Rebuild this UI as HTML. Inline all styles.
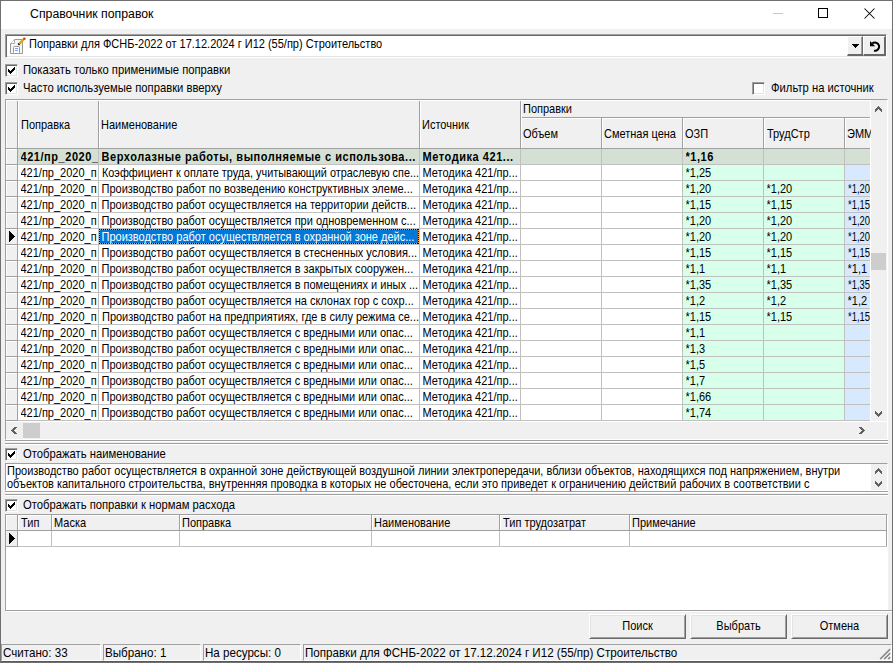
<!DOCTYPE html>
<html><head><meta charset="utf-8">
<style>
*{margin:0;padding:0;box-sizing:border-box}
html,body{width:893px;height:663px;overflow:hidden;background:#f0f0f0}
body{position:relative;font-family:"Liberation Sans",sans-serif;font-size:11px;color:#000}
.a{position:absolute}
.t{position:absolute;white-space:nowrap;line-height:15px;height:15px;transform:scaleY(1.125);transform-origin:0 0}
.c{position:absolute;white-space:nowrap;line-height:15px;height:15px;overflow:hidden;transform:scaleY(1.125);transform-origin:0 0}
.b{font-weight:bold;letter-spacing:0.55px}
.cb{position:absolute;width:13px;height:13px;background:#fff;border-top:1px solid #a0a0a0;border-left:1px solid #a0a0a0;border-right:1px solid #fff;border-bottom:1px solid #fff;box-shadow:inset 1px 1px 0 #696969, inset -1px -1px 0 #e3e3e3}
.btn{position:absolute;height:25px;background:#f0f0f0;border-top:1px solid #fff;border-left:1px solid #fff;border-right:1px solid #696969;border-bottom:1px solid #696969;box-shadow:inset 1px 1px 0 #e3e3e3, inset -1px -1px 0 #a0a0a0;text-align:center;line-height:22px}
</style></head><body>

<div class="a" style="left:0;top:0;width:893px;height:663px;border:1px solid #707070"></div>
<div class="a" style="left:1px;top:1px;width:891px;height:28px;background:#fff;"></div>
<div class="t" style="left:30px;top:6px;font-size:12.3px;line-height:17px;height:17px;transform:none">Справочник поправок</div>
<div class="a" style="left:773px;top:13px;width:10px;height:1px;background:#c8c8c8;"></div>
<div class="a" style="left:818px;top:8px;width:10px;height:10px;border:1px solid #000"></div>
<svg class="a" style="left:863px;top:7px" width="13" height="13"><path d="M1.5 1.5L11.5 11.5M11.5 1.5L1.5 11.5" stroke="#000" stroke-width="1.05"/></svg>
<div class="a" style="left:5px;top:34px;width:882px;height:24px;background:#fff;border-top:1px solid #a0a0a0;border-left:1px solid #a0a0a0;border-bottom:1px solid #fff;border-right:1px solid #fff;box-shadow:inset 1px 1px 0 #696969,inset -1px -1px 0 #e3e3e3"></div>
<svg class="a" style="left:9px;top:37px" width="18" height="18">
<path d="M1.5 6.5 L5.5 2.5 L13.5 2.5 L13.5 16.5 L1.5 16.5 Z" fill="#f6f6f6" stroke="#999"/>
<path d="M1.5 6.5 L5.5 6.5 L5.5 2.5" fill="#fff" stroke="#aaa"/>
<rect x="4.5" y="9.5" width="6" height="7" rx="1" fill="#fff" stroke="#999"/>
<path d="M6 11.5H9M6 13.5H9" stroke="#7c9cff"/>
<path d="M10.2 6.8 L14.6 2.4" stroke="#e6a800" stroke-width="2.4"/>
<path d="M9.3 7.7 L10.3 6.7" stroke="#111" stroke-width="2.2"/>
<circle cx="15.3" cy="1.8" r="1.3" fill="#e82a10"/>
</svg>
<div class="t" style="left:29px;top:36px;">Поправки для ФСНБ-2022 от 17.12.2024 г И12 (55/пр) Строительство</div>
<div class="a" style="left:847px;top:36px;width:16px;height:20px;background:#f0f0f0;border-top:1px solid #fff;border-left:1px solid #fff;border-right:1px solid #696969;border-bottom:2px solid #696969;box-shadow:inset -1px 0 0 #a0a0a0"></div>
<svg class="a" style="left:852px;top:44px" width="7" height="4" shape-rendering="crispEdges"><path d="M0 0h7v1h-7zM1 1h5v1h-5zM2 2h3v1h-3zM3 3h1v1h-1z" fill="#000"/></svg>
<div class="a" style="left:863px;top:36px;width:23px;height:20px;background:#f0f0f0;border-top:1px solid #fff;border-left:1px solid #fff;border-right:2px solid #696969;border-bottom:2px solid #696969"></div>
<svg class="a" style="left:869px;top:40px" width="12" height="12"><path d="M3.2 3.6 A4.1 4.1 0 1 1 5 10.6" stroke="#000" stroke-width="2" fill="none"/><path d="M1 1V6.2H6.2Z" fill="#000"/></svg>
<div class="cb" style="left:5px;top:64px"><svg width="11" height="11" style="position:absolute;left:0;top:0" shape-rendering="crispEdges"><path d="M8 2h1v1h-1zM7 3h2v1h-2zM2 4h1v1h-1zM6 4h3v1h-3zM2 5h2v1h-2zM5 5h3v1h-3zM2 6h5v1h-5zM3 7h3v1h-3zM4 8h1v1h-1z" fill="#000"/></svg></div>
<div class="t" style="left:23px;top:62px;font-size:11.25px">Показать только применимые поправки</div>
<div class="cb" style="left:5px;top:82px"><svg width="11" height="11" style="position:absolute;left:0;top:0" shape-rendering="crispEdges"><path d="M8 2h1v1h-1zM7 3h2v1h-2zM2 4h1v1h-1zM6 4h3v1h-3zM2 5h2v1h-2zM5 5h3v1h-3zM2 6h5v1h-5zM3 7h3v1h-3zM4 8h1v1h-1z" fill="#000"/></svg></div>
<div class="t" style="left:23px;top:80px;font-size:11.25px">Часто используемые поправки вверху</div>
<div class="cb" style="left:752px;top:82px"></div>
<div class="t" style="left:771px;top:80px;font-size:11.25px">Фильтр на источник</div>
<div class="a" style="left:5px;top:99px;width:883px;height:341px;background:#fff;border-top:1px solid #a0a0a0;border-left:1px solid #a0a0a0;border-right:1px solid #fff;border-bottom:1px solid #fff"></div>
<div class="a" style="left:6px;top:100px;width:864px;height:48px;background:#f0f0f0;"></div>
<div class="a" style="left:6px;top:148px;width:864px;height:1px;background:#a0a0a0;"></div>
<div class="a" style="left:17px;top:100px;width:1px;height:48px;background:#a0a0a0;"></div>
<div class="a" style="left:98px;top:100px;width:1px;height:48px;background:#a0a0a0;"></div>
<div class="a" style="left:419px;top:100px;width:1px;height:48px;background:#a0a0a0;"></div>
<div class="a" style="left:520px;top:100px;width:1px;height:48px;background:#a0a0a0;"></div>
<div class="a" style="left:521px;top:117px;width:349px;height:1px;background:#a0a0a0;"></div>
<div class="a" style="left:6px;top:100px;width:864px;height:1px;background:#fff;"></div>
<div class="a" style="left:6px;top:100px;width:1px;height:48px;background:#fff;"></div>
<div class="a" style="left:18px;top:100px;width:1px;height:48px;background:#fff;"></div>
<div class="a" style="left:99px;top:100px;width:1px;height:48px;background:#fff;"></div>
<div class="a" style="left:420px;top:100px;width:1px;height:48px;background:#fff;"></div>
<div class="a" style="left:521px;top:100px;width:1px;height:48px;background:#fff;"></div>
<div class="a" style="left:521px;top:118px;width:349px;height:1px;background:#fff;"></div>
<div class="a" style="left:602px;top:118px;width:1px;height:30px;background:#fff;"></div>
<div class="a" style="left:683px;top:118px;width:1px;height:30px;background:#fff;"></div>
<div class="a" style="left:764px;top:118px;width:1px;height:30px;background:#fff;"></div>
<div class="a" style="left:845px;top:118px;width:1px;height:30px;background:#fff;"></div>
<div class="a" style="left:601px;top:118px;width:1px;height:30px;background:#a0a0a0;"></div>
<div class="a" style="left:682px;top:118px;width:1px;height:30px;background:#a0a0a0;"></div>
<div class="a" style="left:763px;top:118px;width:1px;height:30px;background:#a0a0a0;"></div>
<div class="a" style="left:844px;top:118px;width:1px;height:30px;background:#a0a0a0;"></div>
<div class="t" style="left:21px;top:117px;">Поправка</div>
<div class="t" style="left:101px;top:117px;">Наименование</div>
<div class="t" style="left:422px;top:117px;">Источник</div>
<div class="t" style="left:523px;top:101px;">Поправки</div>
<div class="t" style="left:523px;top:126px;">Объем</div>
<div class="t" style="left:604px;top:126px;">Сметная цена</div>
<div class="t" style="left:685px;top:126px;">ОЗП</div>
<div class="t" style="left:767px;top:126px;">ТрудСтр</div>
<div class="t" style="left:847px;top:126px;">ЭММ</div>
<div class="a" style="left:6px;top:149px;width:11px;height:15px;background:#f0f0f0;border-top:1px solid #fff;border-left:1px solid #fff"></div>
<div class="a" style="left:6px;top:164px;width:12px;height:1px;background:#a0a0a0;"></div>
<div class="a" style="left:17px;top:149px;width:1px;height:15px;background:#a0a0a0;"></div>
<div class="a" style="left:18px;top:149px;width:852px;height:15px;background:#d4e0d4;"></div>
<div class="a" style="left:18px;top:164px;width:852px;height:1px;background:#c0c0c0;"></div>
<div class="a" style="left:98px;top:149px;width:1px;height:15px;background:#c0c0c0;"></div>
<div class="a" style="left:419px;top:149px;width:1px;height:15px;background:#c0c0c0;"></div>
<div class="a" style="left:520px;top:149px;width:1px;height:15px;background:#c0c0c0;"></div>
<div class="a" style="left:601px;top:149px;width:1px;height:15px;background:#c0c0c0;"></div>
<div class="a" style="left:682px;top:149px;width:1px;height:15px;background:#c0c0c0;"></div>
<div class="a" style="left:763px;top:149px;width:1px;height:15px;background:#c0c0c0;"></div>
<div class="a" style="left:844px;top:149px;width:1px;height:15px;background:#c0c0c0;"></div>
<div class="c b" style="left:20.5px;top:149px;width:77.5px;">421/пр_2020_п</div>
<div class="c b" style="left:101.5px;top:149px;width:317.5px;">Верхолазные работы, выполняемые с использова...</div>
<div class="c b" style="left:422.5px;top:149px;width:97.5px;">Методика 421...</div>
<div class="c b" style="left:685.5px;top:149px;width:77.5px;">*1,16</div>
<div class="a" style="left:6px;top:165px;width:11px;height:15px;background:#f0f0f0;border-top:1px solid #fff;border-left:1px solid #fff"></div>
<div class="a" style="left:6px;top:180px;width:12px;height:1px;background:#a0a0a0;"></div>
<div class="a" style="left:17px;top:165px;width:1px;height:15px;background:#a0a0a0;"></div>
<div class="a" style="left:683px;top:165px;width:161px;height:15px;background:#d7ffea;"></div>
<div class="a" style="left:845px;top:165px;width:25px;height:15px;background:#d6e9fe;"></div>
<div class="a" style="left:18px;top:180px;width:852px;height:1px;background:#c0c0c0;"></div>
<div class="a" style="left:98px;top:165px;width:1px;height:15px;background:#c0c0c0;"></div>
<div class="a" style="left:419px;top:165px;width:1px;height:15px;background:#c0c0c0;"></div>
<div class="a" style="left:520px;top:165px;width:1px;height:15px;background:#c0c0c0;"></div>
<div class="a" style="left:601px;top:165px;width:1px;height:15px;background:#c0c0c0;"></div>
<div class="a" style="left:682px;top:165px;width:1px;height:15px;background:#c0c0c0;"></div>
<div class="a" style="left:763px;top:165px;width:1px;height:15px;background:#c0c0c0;"></div>
<div class="a" style="left:844px;top:165px;width:1px;height:15px;background:#c0c0c0;"></div>
<div class="c" style="left:20.5px;top:165px;width:77.5px;">421/пр_2020_п</div>
<div class="c" style="left:101.5px;top:165px;width:323.3955078125px;transform:scale(0.9863,1.125);">Коэффициент к оплате труда, учитывающий отраслевую спе...</div>
<div class="c" style="left:422.5px;top:165px;width:97.5px;">Методика 421/пр...</div>
<div class="c" style="left:685.5px;top:165px;width:77.5px;">*1,25</div>
<div class="a" style="left:6px;top:181px;width:11px;height:15px;background:#f0f0f0;border-top:1px solid #fff;border-left:1px solid #fff"></div>
<div class="a" style="left:6px;top:196px;width:12px;height:1px;background:#a0a0a0;"></div>
<div class="a" style="left:17px;top:181px;width:1px;height:15px;background:#a0a0a0;"></div>
<div class="a" style="left:683px;top:181px;width:161px;height:15px;background:#d7ffea;"></div>
<div class="a" style="left:845px;top:181px;width:25px;height:15px;background:#d6e9fe;"></div>
<div class="a" style="left:18px;top:196px;width:852px;height:1px;background:#c0c0c0;"></div>
<div class="a" style="left:98px;top:181px;width:1px;height:15px;background:#c0c0c0;"></div>
<div class="a" style="left:419px;top:181px;width:1px;height:15px;background:#c0c0c0;"></div>
<div class="a" style="left:520px;top:181px;width:1px;height:15px;background:#c0c0c0;"></div>
<div class="a" style="left:601px;top:181px;width:1px;height:15px;background:#c0c0c0;"></div>
<div class="a" style="left:682px;top:181px;width:1px;height:15px;background:#c0c0c0;"></div>
<div class="a" style="left:763px;top:181px;width:1px;height:15px;background:#c0c0c0;"></div>
<div class="a" style="left:844px;top:181px;width:1px;height:15px;background:#c0c0c0;"></div>
<div class="c" style="left:20.5px;top:181px;width:77.5px;">421/пр_2020_п</div>
<div class="c" style="left:101.5px;top:181px;width:317.5px;">Производство работ по возведению конструктивных элеме...</div>
<div class="c" style="left:422.5px;top:181px;width:97.5px;">Методика 421/пр...</div>
<div class="c" style="left:685.5px;top:181px;width:77.5px;">*1,20</div>
<div class="c" style="left:766.5px;top:181px;width:77.5px;">*1,20</div>
<div class="c" style="left:847.5px;top:181px;width:27.68994140625px;transform:scale(0.8564,1.125);">*1,20</div>
<div class="a" style="left:6px;top:197px;width:11px;height:15px;background:#f0f0f0;border-top:1px solid #fff;border-left:1px solid #fff"></div>
<div class="a" style="left:6px;top:212px;width:12px;height:1px;background:#a0a0a0;"></div>
<div class="a" style="left:17px;top:197px;width:1px;height:15px;background:#a0a0a0;"></div>
<div class="a" style="left:683px;top:197px;width:161px;height:15px;background:#d7ffea;"></div>
<div class="a" style="left:845px;top:197px;width:25px;height:15px;background:#d6e9fe;"></div>
<div class="a" style="left:18px;top:212px;width:852px;height:1px;background:#c0c0c0;"></div>
<div class="a" style="left:98px;top:197px;width:1px;height:15px;background:#c0c0c0;"></div>
<div class="a" style="left:419px;top:197px;width:1px;height:15px;background:#c0c0c0;"></div>
<div class="a" style="left:520px;top:197px;width:1px;height:15px;background:#c0c0c0;"></div>
<div class="a" style="left:601px;top:197px;width:1px;height:15px;background:#c0c0c0;"></div>
<div class="a" style="left:682px;top:197px;width:1px;height:15px;background:#c0c0c0;"></div>
<div class="a" style="left:763px;top:197px;width:1px;height:15px;background:#c0c0c0;"></div>
<div class="a" style="left:844px;top:197px;width:1px;height:15px;background:#c0c0c0;"></div>
<div class="c" style="left:20.5px;top:197px;width:77.5px;">421/пр_2020_п</div>
<div class="c" style="left:101.5px;top:197px;width:317.5px;">Производство работ осуществляется на территории действ...</div>
<div class="c" style="left:422.5px;top:197px;width:97.5px;">Методика 421/пр...</div>
<div class="c" style="left:685.5px;top:197px;width:77.5px;">*1,15</div>
<div class="c" style="left:766.5px;top:197px;width:77.5px;">*1,15</div>
<div class="c" style="left:847.5px;top:197px;width:27.68994140625px;transform:scale(0.8564,1.125);">*1,15</div>
<div class="a" style="left:6px;top:213px;width:11px;height:15px;background:#f0f0f0;border-top:1px solid #fff;border-left:1px solid #fff"></div>
<div class="a" style="left:6px;top:228px;width:12px;height:1px;background:#a0a0a0;"></div>
<div class="a" style="left:17px;top:213px;width:1px;height:15px;background:#a0a0a0;"></div>
<div class="a" style="left:683px;top:213px;width:161px;height:15px;background:#d7ffea;"></div>
<div class="a" style="left:845px;top:213px;width:25px;height:15px;background:#d6e9fe;"></div>
<div class="a" style="left:18px;top:228px;width:852px;height:1px;background:#c0c0c0;"></div>
<div class="a" style="left:98px;top:213px;width:1px;height:15px;background:#c0c0c0;"></div>
<div class="a" style="left:419px;top:213px;width:1px;height:15px;background:#c0c0c0;"></div>
<div class="a" style="left:520px;top:213px;width:1px;height:15px;background:#c0c0c0;"></div>
<div class="a" style="left:601px;top:213px;width:1px;height:15px;background:#c0c0c0;"></div>
<div class="a" style="left:682px;top:213px;width:1px;height:15px;background:#c0c0c0;"></div>
<div class="a" style="left:763px;top:213px;width:1px;height:15px;background:#c0c0c0;"></div>
<div class="a" style="left:844px;top:213px;width:1px;height:15px;background:#c0c0c0;"></div>
<div class="c" style="left:20.5px;top:213px;width:77.5px;">421/пр_2020_п</div>
<div class="c" style="left:101.5px;top:213px;width:317.5px;">Производство работ осуществляется при одновременном с...</div>
<div class="c" style="left:422.5px;top:213px;width:97.5px;">Методика 421/пр...</div>
<div class="c" style="left:685.5px;top:213px;width:77.5px;">*1,20</div>
<div class="c" style="left:766.5px;top:213px;width:77.5px;">*1,20</div>
<div class="c" style="left:847.5px;top:213px;width:27.68994140625px;transform:scale(0.8564,1.125);">*1,20</div>
<div class="a" style="left:6px;top:229px;width:11px;height:15px;background:#f0f0f0;border-top:1px solid #fff;border-left:1px solid #fff"></div>
<div class="a" style="left:6px;top:244px;width:12px;height:1px;background:#a0a0a0;"></div>
<div class="a" style="left:17px;top:229px;width:1px;height:15px;background:#a0a0a0;"></div>
<div class="a" style="left:683px;top:229px;width:161px;height:15px;background:#d7ffea;"></div>
<div class="a" style="left:845px;top:229px;width:25px;height:15px;background:#d6e9fe;"></div>
<div class="a" style="left:18px;top:244px;width:852px;height:1px;background:#c0c0c0;"></div>
<div class="a" style="left:98px;top:229px;width:1px;height:15px;background:#c0c0c0;"></div>
<div class="a" style="left:419px;top:229px;width:1px;height:15px;background:#c0c0c0;"></div>
<div class="a" style="left:520px;top:229px;width:1px;height:15px;background:#c0c0c0;"></div>
<div class="a" style="left:601px;top:229px;width:1px;height:15px;background:#c0c0c0;"></div>
<div class="a" style="left:682px;top:229px;width:1px;height:15px;background:#c0c0c0;"></div>
<div class="a" style="left:763px;top:229px;width:1px;height:15px;background:#c0c0c0;"></div>
<div class="a" style="left:844px;top:229px;width:1px;height:15px;background:#c0c0c0;"></div>
<div class="c" style="left:20.5px;top:229px;width:77.5px;">421/пр_2020_п</div>
<div class="c" style="left:422.5px;top:229px;width:97.5px;">Методика 421/пр...</div>
<div class="c" style="left:685.5px;top:229px;width:77.5px;">*1,20</div>
<div class="c" style="left:766.5px;top:229px;width:77.5px;">*1,20</div>
<div class="c" style="left:847.5px;top:229px;width:27.68994140625px;transform:scale(0.8564,1.125);">*1,20</div>
<div class="a" style="left:99px;top:229px;width:320px;height:15px;background:#0078d7;"></div>
<div class="a" style="left:99px;top:229px;width:320px;height:1px;background:repeating-linear-gradient(90deg,#000 0 1px,#ff9a2e 1px 2px);"></div>
<div class="a" style="left:99px;top:243px;width:320px;height:1px;background:repeating-linear-gradient(90deg,#000 0 1px,#ff9a2e 1px 2px);"></div>
<div class="a" style="left:99px;top:229px;width:1px;height:15px;background:repeating-linear-gradient(180deg,#000 0 1px,#ff9a2e 1px 2px);"></div>
<div class="a" style="left:418px;top:229px;width:1px;height:15px;background:repeating-linear-gradient(180deg,#000 0 1px,#ff9a2e 1px 2px);"></div>
<div class="c" style="left:101.5px;top:229px;width:316px;color:#fff">Производство работ осуществляется в охранной зоне дейс...</div>
<svg class="a" style="left:9px;top:231px" width="6" height="11" shape-rendering="crispEdges"><path d="M0 0h1v1h-1zM0 1h2v1h-2zM0 2h3v1h-3zM0 3h4v1h-4zM0 4h5v1h-5zM0 5h6v1h-6zM0 6h5v1h-5zM0 7h4v1h-4zM0 8h3v1h-3zM0 9h2v1h-2zM0 10h1v1h-1z" fill="#000"/></svg>
<div class="a" style="left:6px;top:245px;width:11px;height:15px;background:#f0f0f0;border-top:1px solid #fff;border-left:1px solid #fff"></div>
<div class="a" style="left:6px;top:260px;width:12px;height:1px;background:#a0a0a0;"></div>
<div class="a" style="left:17px;top:245px;width:1px;height:15px;background:#a0a0a0;"></div>
<div class="a" style="left:683px;top:245px;width:161px;height:15px;background:#d7ffea;"></div>
<div class="a" style="left:845px;top:245px;width:25px;height:15px;background:#d6e9fe;"></div>
<div class="a" style="left:18px;top:260px;width:852px;height:1px;background:#c0c0c0;"></div>
<div class="a" style="left:98px;top:245px;width:1px;height:15px;background:#c0c0c0;"></div>
<div class="a" style="left:419px;top:245px;width:1px;height:15px;background:#c0c0c0;"></div>
<div class="a" style="left:520px;top:245px;width:1px;height:15px;background:#c0c0c0;"></div>
<div class="a" style="left:601px;top:245px;width:1px;height:15px;background:#c0c0c0;"></div>
<div class="a" style="left:682px;top:245px;width:1px;height:15px;background:#c0c0c0;"></div>
<div class="a" style="left:763px;top:245px;width:1px;height:15px;background:#c0c0c0;"></div>
<div class="a" style="left:844px;top:245px;width:1px;height:15px;background:#c0c0c0;"></div>
<div class="c" style="left:20.5px;top:245px;width:77.5px;">421/пр_2020_п</div>
<div class="c" style="left:101.5px;top:245px;width:317.5px;">Производство работ осуществляется в стесненных условия...</div>
<div class="c" style="left:422.5px;top:245px;width:97.5px;">Методика 421/пр...</div>
<div class="c" style="left:685.5px;top:245px;width:77.5px;">*1,15</div>
<div class="c" style="left:766.5px;top:245px;width:77.5px;">*1,15</div>
<div class="c" style="left:847.5px;top:245px;width:27.68994140625px;transform:scale(0.8564,1.125);">*1,15</div>
<div class="a" style="left:6px;top:261px;width:11px;height:15px;background:#f0f0f0;border-top:1px solid #fff;border-left:1px solid #fff"></div>
<div class="a" style="left:6px;top:276px;width:12px;height:1px;background:#a0a0a0;"></div>
<div class="a" style="left:17px;top:261px;width:1px;height:15px;background:#a0a0a0;"></div>
<div class="a" style="left:683px;top:261px;width:161px;height:15px;background:#d7ffea;"></div>
<div class="a" style="left:845px;top:261px;width:25px;height:15px;background:#d6e9fe;"></div>
<div class="a" style="left:18px;top:276px;width:852px;height:1px;background:#c0c0c0;"></div>
<div class="a" style="left:98px;top:261px;width:1px;height:15px;background:#c0c0c0;"></div>
<div class="a" style="left:419px;top:261px;width:1px;height:15px;background:#c0c0c0;"></div>
<div class="a" style="left:520px;top:261px;width:1px;height:15px;background:#c0c0c0;"></div>
<div class="a" style="left:601px;top:261px;width:1px;height:15px;background:#c0c0c0;"></div>
<div class="a" style="left:682px;top:261px;width:1px;height:15px;background:#c0c0c0;"></div>
<div class="a" style="left:763px;top:261px;width:1px;height:15px;background:#c0c0c0;"></div>
<div class="a" style="left:844px;top:261px;width:1px;height:15px;background:#c0c0c0;"></div>
<div class="c" style="left:20.5px;top:261px;width:77.5px;">421/пр_2020_п</div>
<div class="c" style="left:101.5px;top:261px;width:317.5px;">Производство работ осуществляется в закрытых сооружен...</div>
<div class="c" style="left:422.5px;top:261px;width:97.5px;">Методика 421/пр...</div>
<div class="c" style="left:685.5px;top:261px;width:77.5px;">*1,1</div>
<div class="c" style="left:766.5px;top:261px;width:77.5px;">*1,1</div>
<div class="c" style="left:847.5px;top:261px;width:22.5px;">*1,1</div>
<div class="a" style="left:6px;top:277px;width:11px;height:15px;background:#f0f0f0;border-top:1px solid #fff;border-left:1px solid #fff"></div>
<div class="a" style="left:6px;top:292px;width:12px;height:1px;background:#a0a0a0;"></div>
<div class="a" style="left:17px;top:277px;width:1px;height:15px;background:#a0a0a0;"></div>
<div class="a" style="left:683px;top:277px;width:161px;height:15px;background:#d7ffea;"></div>
<div class="a" style="left:845px;top:277px;width:25px;height:15px;background:#d6e9fe;"></div>
<div class="a" style="left:18px;top:292px;width:852px;height:1px;background:#c0c0c0;"></div>
<div class="a" style="left:98px;top:277px;width:1px;height:15px;background:#c0c0c0;"></div>
<div class="a" style="left:419px;top:277px;width:1px;height:15px;background:#c0c0c0;"></div>
<div class="a" style="left:520px;top:277px;width:1px;height:15px;background:#c0c0c0;"></div>
<div class="a" style="left:601px;top:277px;width:1px;height:15px;background:#c0c0c0;"></div>
<div class="a" style="left:682px;top:277px;width:1px;height:15px;background:#c0c0c0;"></div>
<div class="a" style="left:763px;top:277px;width:1px;height:15px;background:#c0c0c0;"></div>
<div class="a" style="left:844px;top:277px;width:1px;height:15px;background:#c0c0c0;"></div>
<div class="c" style="left:20.5px;top:277px;width:77.5px;">421/пр_2020_п</div>
<div class="c" style="left:101.5px;top:277px;width:317.5px;">Производство работ осуществляется в помещениях и иных ...</div>
<div class="c" style="left:422.5px;top:277px;width:97.5px;">Методика 421/пр...</div>
<div class="c" style="left:685.5px;top:277px;width:77.5px;">*1,35</div>
<div class="c" style="left:766.5px;top:277px;width:77.5px;">*1,35</div>
<div class="c" style="left:847.5px;top:277px;width:27.68994140625px;transform:scale(0.8564,1.125);">*1,35</div>
<div class="a" style="left:6px;top:293px;width:11px;height:15px;background:#f0f0f0;border-top:1px solid #fff;border-left:1px solid #fff"></div>
<div class="a" style="left:6px;top:308px;width:12px;height:1px;background:#a0a0a0;"></div>
<div class="a" style="left:17px;top:293px;width:1px;height:15px;background:#a0a0a0;"></div>
<div class="a" style="left:683px;top:293px;width:161px;height:15px;background:#d7ffea;"></div>
<div class="a" style="left:845px;top:293px;width:25px;height:15px;background:#d6e9fe;"></div>
<div class="a" style="left:18px;top:308px;width:852px;height:1px;background:#c0c0c0;"></div>
<div class="a" style="left:98px;top:293px;width:1px;height:15px;background:#c0c0c0;"></div>
<div class="a" style="left:419px;top:293px;width:1px;height:15px;background:#c0c0c0;"></div>
<div class="a" style="left:520px;top:293px;width:1px;height:15px;background:#c0c0c0;"></div>
<div class="a" style="left:601px;top:293px;width:1px;height:15px;background:#c0c0c0;"></div>
<div class="a" style="left:682px;top:293px;width:1px;height:15px;background:#c0c0c0;"></div>
<div class="a" style="left:763px;top:293px;width:1px;height:15px;background:#c0c0c0;"></div>
<div class="a" style="left:844px;top:293px;width:1px;height:15px;background:#c0c0c0;"></div>
<div class="c" style="left:20.5px;top:293px;width:77.5px;">421/пр_2020_п</div>
<div class="c" style="left:101.5px;top:293px;width:317.5px;">Производство работ осуществляется на склонах гор с сохр...</div>
<div class="c" style="left:422.5px;top:293px;width:97.5px;">Методика 421/пр...</div>
<div class="c" style="left:685.5px;top:293px;width:77.5px;">*1,2</div>
<div class="c" style="left:766.5px;top:293px;width:77.5px;">*1,2</div>
<div class="c" style="left:847.5px;top:293px;width:22.5px;">*1,2</div>
<div class="a" style="left:6px;top:309px;width:11px;height:15px;background:#f0f0f0;border-top:1px solid #fff;border-left:1px solid #fff"></div>
<div class="a" style="left:6px;top:324px;width:12px;height:1px;background:#a0a0a0;"></div>
<div class="a" style="left:17px;top:309px;width:1px;height:15px;background:#a0a0a0;"></div>
<div class="a" style="left:683px;top:309px;width:161px;height:15px;background:#d7ffea;"></div>
<div class="a" style="left:845px;top:309px;width:25px;height:15px;background:#d6e9fe;"></div>
<div class="a" style="left:18px;top:324px;width:852px;height:1px;background:#c0c0c0;"></div>
<div class="a" style="left:98px;top:309px;width:1px;height:15px;background:#c0c0c0;"></div>
<div class="a" style="left:419px;top:309px;width:1px;height:15px;background:#c0c0c0;"></div>
<div class="a" style="left:520px;top:309px;width:1px;height:15px;background:#c0c0c0;"></div>
<div class="a" style="left:601px;top:309px;width:1px;height:15px;background:#c0c0c0;"></div>
<div class="a" style="left:682px;top:309px;width:1px;height:15px;background:#c0c0c0;"></div>
<div class="a" style="left:763px;top:309px;width:1px;height:15px;background:#c0c0c0;"></div>
<div class="a" style="left:844px;top:309px;width:1px;height:15px;background:#c0c0c0;"></div>
<div class="c" style="left:20.5px;top:309px;width:77.5px;">421/пр_2020_п</div>
<div class="c" style="left:101.5px;top:309px;width:319.5927734375px;transform:scale(0.9981,1.125);">Производство работ на предприятиях, где в силу режима се...</div>
<div class="c" style="left:422.5px;top:309px;width:97.5px;">Методика 421/пр...</div>
<div class="c" style="left:685.5px;top:309px;width:77.5px;">*1,15</div>
<div class="c" style="left:766.5px;top:309px;width:77.5px;">*1,15</div>
<div class="c" style="left:847.5px;top:309px;width:27.68994140625px;transform:scale(0.8564,1.125);">*1,15</div>
<div class="a" style="left:6px;top:325px;width:11px;height:15px;background:#f0f0f0;border-top:1px solid #fff;border-left:1px solid #fff"></div>
<div class="a" style="left:6px;top:340px;width:12px;height:1px;background:#a0a0a0;"></div>
<div class="a" style="left:17px;top:325px;width:1px;height:15px;background:#a0a0a0;"></div>
<div class="a" style="left:683px;top:325px;width:161px;height:15px;background:#d7ffea;"></div>
<div class="a" style="left:845px;top:325px;width:25px;height:15px;background:#d6e9fe;"></div>
<div class="a" style="left:18px;top:340px;width:852px;height:1px;background:#c0c0c0;"></div>
<div class="a" style="left:98px;top:325px;width:1px;height:15px;background:#c0c0c0;"></div>
<div class="a" style="left:419px;top:325px;width:1px;height:15px;background:#c0c0c0;"></div>
<div class="a" style="left:520px;top:325px;width:1px;height:15px;background:#c0c0c0;"></div>
<div class="a" style="left:601px;top:325px;width:1px;height:15px;background:#c0c0c0;"></div>
<div class="a" style="left:682px;top:325px;width:1px;height:15px;background:#c0c0c0;"></div>
<div class="a" style="left:763px;top:325px;width:1px;height:15px;background:#c0c0c0;"></div>
<div class="a" style="left:844px;top:325px;width:1px;height:15px;background:#c0c0c0;"></div>
<div class="c" style="left:20.5px;top:325px;width:77.5px;">421/пр_2020_п</div>
<div class="c" style="left:101.5px;top:325px;width:317.5px;">Производство работ осуществляется с вредными или опас...</div>
<div class="c" style="left:422.5px;top:325px;width:97.5px;">Методика 421/пр...</div>
<div class="c" style="left:685.5px;top:325px;width:77.5px;">*1,1</div>
<div class="a" style="left:6px;top:341px;width:11px;height:15px;background:#f0f0f0;border-top:1px solid #fff;border-left:1px solid #fff"></div>
<div class="a" style="left:6px;top:356px;width:12px;height:1px;background:#a0a0a0;"></div>
<div class="a" style="left:17px;top:341px;width:1px;height:15px;background:#a0a0a0;"></div>
<div class="a" style="left:683px;top:341px;width:161px;height:15px;background:#d7ffea;"></div>
<div class="a" style="left:845px;top:341px;width:25px;height:15px;background:#d6e9fe;"></div>
<div class="a" style="left:18px;top:356px;width:852px;height:1px;background:#c0c0c0;"></div>
<div class="a" style="left:98px;top:341px;width:1px;height:15px;background:#c0c0c0;"></div>
<div class="a" style="left:419px;top:341px;width:1px;height:15px;background:#c0c0c0;"></div>
<div class="a" style="left:520px;top:341px;width:1px;height:15px;background:#c0c0c0;"></div>
<div class="a" style="left:601px;top:341px;width:1px;height:15px;background:#c0c0c0;"></div>
<div class="a" style="left:682px;top:341px;width:1px;height:15px;background:#c0c0c0;"></div>
<div class="a" style="left:763px;top:341px;width:1px;height:15px;background:#c0c0c0;"></div>
<div class="a" style="left:844px;top:341px;width:1px;height:15px;background:#c0c0c0;"></div>
<div class="c" style="left:20.5px;top:341px;width:77.5px;">421/пр_2020_п</div>
<div class="c" style="left:101.5px;top:341px;width:317.5px;">Производство работ осуществляется с вредными или опас...</div>
<div class="c" style="left:422.5px;top:341px;width:97.5px;">Методика 421/пр...</div>
<div class="c" style="left:685.5px;top:341px;width:77.5px;">*1,3</div>
<div class="a" style="left:6px;top:357px;width:11px;height:15px;background:#f0f0f0;border-top:1px solid #fff;border-left:1px solid #fff"></div>
<div class="a" style="left:6px;top:372px;width:12px;height:1px;background:#a0a0a0;"></div>
<div class="a" style="left:17px;top:357px;width:1px;height:15px;background:#a0a0a0;"></div>
<div class="a" style="left:683px;top:357px;width:161px;height:15px;background:#d7ffea;"></div>
<div class="a" style="left:845px;top:357px;width:25px;height:15px;background:#d6e9fe;"></div>
<div class="a" style="left:18px;top:372px;width:852px;height:1px;background:#c0c0c0;"></div>
<div class="a" style="left:98px;top:357px;width:1px;height:15px;background:#c0c0c0;"></div>
<div class="a" style="left:419px;top:357px;width:1px;height:15px;background:#c0c0c0;"></div>
<div class="a" style="left:520px;top:357px;width:1px;height:15px;background:#c0c0c0;"></div>
<div class="a" style="left:601px;top:357px;width:1px;height:15px;background:#c0c0c0;"></div>
<div class="a" style="left:682px;top:357px;width:1px;height:15px;background:#c0c0c0;"></div>
<div class="a" style="left:763px;top:357px;width:1px;height:15px;background:#c0c0c0;"></div>
<div class="a" style="left:844px;top:357px;width:1px;height:15px;background:#c0c0c0;"></div>
<div class="c" style="left:20.5px;top:357px;width:77.5px;">421/пр_2020_п</div>
<div class="c" style="left:101.5px;top:357px;width:317.5px;">Производство работ осуществляется с вредными или опас...</div>
<div class="c" style="left:422.5px;top:357px;width:97.5px;">Методика 421/пр...</div>
<div class="c" style="left:685.5px;top:357px;width:77.5px;">*1,5</div>
<div class="a" style="left:6px;top:373px;width:11px;height:15px;background:#f0f0f0;border-top:1px solid #fff;border-left:1px solid #fff"></div>
<div class="a" style="left:6px;top:388px;width:12px;height:1px;background:#a0a0a0;"></div>
<div class="a" style="left:17px;top:373px;width:1px;height:15px;background:#a0a0a0;"></div>
<div class="a" style="left:683px;top:373px;width:161px;height:15px;background:#d7ffea;"></div>
<div class="a" style="left:845px;top:373px;width:25px;height:15px;background:#d6e9fe;"></div>
<div class="a" style="left:18px;top:388px;width:852px;height:1px;background:#c0c0c0;"></div>
<div class="a" style="left:98px;top:373px;width:1px;height:15px;background:#c0c0c0;"></div>
<div class="a" style="left:419px;top:373px;width:1px;height:15px;background:#c0c0c0;"></div>
<div class="a" style="left:520px;top:373px;width:1px;height:15px;background:#c0c0c0;"></div>
<div class="a" style="left:601px;top:373px;width:1px;height:15px;background:#c0c0c0;"></div>
<div class="a" style="left:682px;top:373px;width:1px;height:15px;background:#c0c0c0;"></div>
<div class="a" style="left:763px;top:373px;width:1px;height:15px;background:#c0c0c0;"></div>
<div class="a" style="left:844px;top:373px;width:1px;height:15px;background:#c0c0c0;"></div>
<div class="c" style="left:20.5px;top:373px;width:77.5px;">421/пр_2020_п</div>
<div class="c" style="left:101.5px;top:373px;width:317.5px;">Производство работ осуществляется с вредными или опас...</div>
<div class="c" style="left:422.5px;top:373px;width:97.5px;">Методика 421/пр...</div>
<div class="c" style="left:685.5px;top:373px;width:77.5px;">*1,7</div>
<div class="a" style="left:6px;top:389px;width:11px;height:15px;background:#f0f0f0;border-top:1px solid #fff;border-left:1px solid #fff"></div>
<div class="a" style="left:6px;top:404px;width:12px;height:1px;background:#a0a0a0;"></div>
<div class="a" style="left:17px;top:389px;width:1px;height:15px;background:#a0a0a0;"></div>
<div class="a" style="left:683px;top:389px;width:161px;height:15px;background:#d7ffea;"></div>
<div class="a" style="left:845px;top:389px;width:25px;height:15px;background:#d6e9fe;"></div>
<div class="a" style="left:18px;top:404px;width:852px;height:1px;background:#c0c0c0;"></div>
<div class="a" style="left:98px;top:389px;width:1px;height:15px;background:#c0c0c0;"></div>
<div class="a" style="left:419px;top:389px;width:1px;height:15px;background:#c0c0c0;"></div>
<div class="a" style="left:520px;top:389px;width:1px;height:15px;background:#c0c0c0;"></div>
<div class="a" style="left:601px;top:389px;width:1px;height:15px;background:#c0c0c0;"></div>
<div class="a" style="left:682px;top:389px;width:1px;height:15px;background:#c0c0c0;"></div>
<div class="a" style="left:763px;top:389px;width:1px;height:15px;background:#c0c0c0;"></div>
<div class="a" style="left:844px;top:389px;width:1px;height:15px;background:#c0c0c0;"></div>
<div class="c" style="left:20.5px;top:389px;width:77.5px;">421/пр_2020_п</div>
<div class="c" style="left:101.5px;top:389px;width:317.5px;">Производство работ осуществляется с вредными или опас...</div>
<div class="c" style="left:422.5px;top:389px;width:97.5px;">Методика 421/пр...</div>
<div class="c" style="left:685.5px;top:389px;width:77.5px;">*1,66</div>
<div class="a" style="left:6px;top:405px;width:11px;height:15px;background:#f0f0f0;border-top:1px solid #fff;border-left:1px solid #fff"></div>
<div class="a" style="left:6px;top:420px;width:12px;height:1px;background:#a0a0a0;"></div>
<div class="a" style="left:17px;top:405px;width:1px;height:15px;background:#a0a0a0;"></div>
<div class="a" style="left:683px;top:405px;width:161px;height:15px;background:#d7ffea;"></div>
<div class="a" style="left:845px;top:405px;width:25px;height:15px;background:#d6e9fe;"></div>
<div class="a" style="left:18px;top:420px;width:852px;height:1px;background:#c0c0c0;"></div>
<div class="a" style="left:98px;top:405px;width:1px;height:15px;background:#c0c0c0;"></div>
<div class="a" style="left:419px;top:405px;width:1px;height:15px;background:#c0c0c0;"></div>
<div class="a" style="left:520px;top:405px;width:1px;height:15px;background:#c0c0c0;"></div>
<div class="a" style="left:601px;top:405px;width:1px;height:15px;background:#c0c0c0;"></div>
<div class="a" style="left:682px;top:405px;width:1px;height:15px;background:#c0c0c0;"></div>
<div class="a" style="left:763px;top:405px;width:1px;height:15px;background:#c0c0c0;"></div>
<div class="a" style="left:844px;top:405px;width:1px;height:15px;background:#c0c0c0;"></div>
<div class="c" style="left:20.5px;top:405px;width:77.5px;">421/пр_2020_п</div>
<div class="c" style="left:101.5px;top:405px;width:317.5px;">Производство работ осуществляется с вредными или опас...</div>
<div class="c" style="left:422.5px;top:405px;width:97.5px;">Методика 421/пр...</div>
<div class="c" style="left:685.5px;top:405px;width:77.5px;">*1,74</div>
<div class="a" style="left:871px;top:100px;width:16px;height:321px;background:#f0f0f0;"></div>
<svg class="a" style="left:875px;top:106px" width="7" height="6" shape-rendering="crispEdges"><path d="M3 0h1v1h-1zM2 1h3v1h-3zM1 2h5v1h-5zM0 3h3v1h-3zM4 3h3v1h-3zM0 4h2v1h-2zM5 4h2v1h-2zM0 5h1v1h-1zM6 5h1v1h-1z" fill="#606060"/></svg>
<svg class="a" style="left:875px;top:411px" width="7" height="6" shape-rendering="crispEdges"><path d="M0 0h1v1h-1zM6 0h1v1h-1zM0 1h2v1h-2zM5 1h2v1h-2zM0 2h3v1h-3zM4 2h3v1h-3zM1 3h5v1h-5zM2 4h3v1h-3zM3 5h1v1h-1z" fill="#606060"/></svg>
<div class="a" style="left:871px;top:253px;width:15px;height:17px;background:#cdcdcd;"></div>
<div class="a" style="left:6px;top:421px;width:881px;height:1px;background:#fff;"></div>
<div class="a" style="left:6px;top:422px;width:881px;height:17px;background:#f0f0f0;"></div>
<svg class="a" style="left:11px;top:427px" width="6" height="7" shape-rendering="crispEdges"><path d="M3 0h3v1h-3zM2 1h3v1h-3zM1 2h3v1h-3zM0 3h3v1h-3zM1 4h3v1h-3zM2 5h3v1h-3zM3 6h3v1h-3z" fill="#606060"/></svg>
<svg class="a" style="left:859px;top:427px" width="6" height="7" shape-rendering="crispEdges"><path d="M0 0h3v1h-3zM1 1h3v1h-3zM2 2h3v1h-3zM3 3h3v1h-3zM2 4h3v1h-3zM1 5h3v1h-3zM0 6h3v1h-3z" fill="#606060"/></svg>
<div class="a" style="left:23px;top:423px;width:17px;height:15px;background:#cdcdcd;"></div>
<div class="a" style="left:5px;top:440px;width:883px;height:1px;background:#a0a0a0;"></div>
<div class="a" style="left:5px;top:441px;width:883px;height:1px;background:#fff;"></div>
<div class="a" style="left:5px;top:443px;width:883px;height:1px;background:#a0a0a0;"></div>
<div class="a" style="left:5px;top:444px;width:883px;height:1px;background:#fff;"></div>
<div class="cb" style="left:5px;top:448px"><svg width="11" height="11" style="position:absolute;left:0;top:0" shape-rendering="crispEdges"><path d="M8 2h1v1h-1zM7 3h2v1h-2zM2 4h1v1h-1zM6 4h3v1h-3zM2 5h2v1h-2zM5 5h3v1h-3zM2 6h5v1h-5zM3 7h3v1h-3zM4 8h1v1h-1z" fill="#000"/></svg></div>
<div class="t" style="left:23px;top:446px;font-size:11.25px">Отображать наименование</div>
<div class="a" style="left:5px;top:463px;width:883px;height:28px;background:#fff;border-top:1px solid #a0a0a0;border-left:1px solid #a0a0a0;border-right:1px solid #fff;border-bottom:1px solid #fff"></div>
<div class="t" style="left:7px;top:463px;">Производство работ осуществляется в охранной зоне действующей воздушной линии электропередачи, вблизи объектов, находящихся под напряжением, внутри</div>
<div class="t" style="left:7px;top:476px;">объектов капитального строительства, внутренняя проводка в которых не обесточена, если это приведет к ограничению действий рабочих в соответствии с</div>
<div class="a" style="left:871px;top:464px;width:16px;height:26px;background:#f0f0f0;"></div>
<svg class="a" style="left:875px;top:468px" width="7" height="6" shape-rendering="crispEdges"><path d="M3 0h1v1h-1zM2 1h3v1h-3zM1 2h5v1h-5zM0 3h3v1h-3zM4 3h3v1h-3zM0 4h2v1h-2zM5 4h2v1h-2zM0 5h1v1h-1zM6 5h1v1h-1z" fill="#606060"/></svg>
<svg class="a" style="left:875px;top:481px" width="7" height="6" shape-rendering="crispEdges"><path d="M0 0h1v1h-1zM6 0h1v1h-1zM0 1h2v1h-2zM5 1h2v1h-2zM0 2h3v1h-3zM4 2h3v1h-3zM1 3h5v1h-5zM2 4h3v1h-3zM3 5h1v1h-1z" fill="#606060"/></svg>
<div class="a" style="left:5px;top:491px;width:883px;height:1px;background:#a0a0a0;"></div>
<div class="a" style="left:5px;top:492px;width:883px;height:1px;background:#fff;"></div>
<div class="a" style="left:5px;top:494px;width:883px;height:1px;background:#a0a0a0;"></div>
<div class="a" style="left:5px;top:495px;width:883px;height:1px;background:#fff;"></div>
<div class="cb" style="left:5px;top:499px"><svg width="11" height="11" style="position:absolute;left:0;top:0" shape-rendering="crispEdges"><path d="M8 2h1v1h-1zM7 3h2v1h-2zM2 4h1v1h-1zM6 4h3v1h-3zM2 5h2v1h-2zM5 5h3v1h-3zM2 6h5v1h-5zM3 7h3v1h-3zM4 8h1v1h-1z" fill="#000"/></svg></div>
<div class="t" style="left:23px;top:497px;font-size:11.25px">Отображать поправки к нормам расхода</div>
<div class="a" style="left:5px;top:514px;width:883px;height:97px;background:#fff;border-top:1px solid #a0a0a0;border-left:1px solid #a0a0a0;border-right:1px solid #fff;border-bottom:1px solid #fff"></div>
<div class="a" style="left:6px;top:515px;width:881px;height:15px;background:#f0f0f0;"></div>
<div class="a" style="left:6px;top:515px;width:880px;height:1px;background:#fff;"></div>
<div class="a" style="left:6px;top:515px;width:1px;height:15px;background:#fff;"></div>
<div class="a" style="left:18px;top:515px;width:1px;height:15px;background:#fff;"></div>
<div class="a" style="left:52px;top:515px;width:1px;height:15px;background:#fff;"></div>
<div class="a" style="left:180px;top:515px;width:1px;height:15px;background:#fff;"></div>
<div class="a" style="left:372px;top:515px;width:1px;height:15px;background:#fff;"></div>
<div class="a" style="left:500px;top:515px;width:1px;height:15px;background:#fff;"></div>
<div class="a" style="left:630px;top:515px;width:1px;height:15px;background:#fff;"></div>
<div class="a" style="left:6px;top:530px;width:881px;height:1px;background:#a0a0a0;"></div>
<div class="a" style="left:886px;top:515px;width:1px;height:31px;background:#a0a0a0;"></div>
<div class="a" style="left:17px;top:515px;width:1px;height:15px;background:#a0a0a0;"></div>
<div class="a" style="left:51px;top:515px;width:1px;height:15px;background:#a0a0a0;"></div>
<div class="a" style="left:179px;top:515px;width:1px;height:15px;background:#a0a0a0;"></div>
<div class="a" style="left:371px;top:515px;width:1px;height:15px;background:#a0a0a0;"></div>
<div class="a" style="left:499px;top:515px;width:1px;height:15px;background:#a0a0a0;"></div>
<div class="a" style="left:629px;top:515px;width:1px;height:15px;background:#a0a0a0;"></div>
<div class="a" style="left:51px;top:531px;width:1px;height:15px;background:#c0c0c0;"></div>
<div class="a" style="left:179px;top:531px;width:1px;height:15px;background:#c0c0c0;"></div>
<div class="a" style="left:371px;top:531px;width:1px;height:15px;background:#c0c0c0;"></div>
<div class="a" style="left:499px;top:531px;width:1px;height:15px;background:#c0c0c0;"></div>
<div class="a" style="left:629px;top:531px;width:1px;height:15px;background:#c0c0c0;"></div>
<div class="a" style="left:6px;top:531px;width:11px;height:15px;background:#f0f0f0;"></div>
<div class="a" style="left:17px;top:531px;width:1px;height:15px;background:#a0a0a0;"></div>
<div class="a" style="left:6px;top:546px;width:12px;height:1px;background:#a0a0a0;"></div>
<div class="a" style="left:18px;top:546px;width:869px;height:1px;background:#c0c0c0;"></div>
<svg class="a" style="left:9px;top:533px" width="6" height="11" shape-rendering="crispEdges"><path d="M0 0h1v1h-1zM0 1h2v1h-2zM0 2h3v1h-3zM0 3h4v1h-4zM0 4h5v1h-5zM0 5h6v1h-6zM0 6h5v1h-5zM0 7h4v1h-4zM0 8h3v1h-3zM0 9h2v1h-2zM0 10h1v1h-1z" fill="#000"/></svg>
<div class="t" style="left:21px;top:515px;">Тип</div>
<div class="t" style="left:54px;top:515px;">Маска</div>
<div class="t" style="left:182px;top:515px;">Поправка</div>
<div class="t" style="left:374px;top:515px;">Наименование</div>
<div class="t" style="left:503px;top:515px;">Тип трудозатрат</div>
<div class="t" style="left:632px;top:515px;">Примечание</div>
<div class="a" style="left:5px;top:610px;width:887px;height:1px;background:#a0a0a0;"></div>
<div class="a" style="left:5px;top:611px;width:887px;height:1px;background:#fff;"></div>
<div class="btn" style="left:589px;top:614px;width:97px"></div>
<div class="t" style="left:589px;top:618px;width:97px;text-align:center">Поиск</div>
<div class="btn" style="left:690px;top:614px;width:97px"></div>
<div class="t" style="left:690px;top:618px;width:97px;text-align:center">Выбрать</div>
<div class="btn" style="left:791px;top:614px;width:97px"></div>
<div class="t" style="left:791px;top:618px;width:97px;text-align:center">Отмена</div>
<div class="a" style="left:1px;top:644px;width:100px;height:17px;border-top:1px solid #a0a0a0;border-left:1px solid #a0a0a0;border-right:1px solid #fff;border-bottom:1px solid #fff"></div>
<div class="t" style="left:3px;top:643px;font-size:11.6px;line-height:17px;height:17px;transform:scaleY(1.1)">Считано: 33</div>
<div class="a" style="left:103px;top:644px;width:98px;height:17px;border-top:1px solid #a0a0a0;border-left:1px solid #a0a0a0;border-right:1px solid #fff;border-bottom:1px solid #fff"></div>
<div class="t" style="left:105px;top:643px;font-size:11.6px;line-height:17px;height:17px;transform:scaleY(1.1)">Выбрано: 1</div>
<div class="a" style="left:203px;top:644px;width:98px;height:17px;border-top:1px solid #a0a0a0;border-left:1px solid #a0a0a0;border-right:1px solid #fff;border-bottom:1px solid #fff"></div>
<div class="t" style="left:205px;top:643px;font-size:11.6px;line-height:17px;height:17px;transform:scaleY(1.1)">На ресурсы: 0</div>
<div class="a" style="left:303px;top:644px;width:589px;height:17px;border-top:1px solid #a0a0a0;border-left:1px solid #a0a0a0;border-right:1px solid #fff;border-bottom:1px solid #fff"></div>
<div class="t" style="left:305px;top:643px;font-size:11.6px;line-height:17px;height:17px;transform:scaleY(1.1)">Поправки для ФСНБ-2022 от 17.12.2024 г И12 (55/пр) Строительство</div>
<div class="a" style="left:1px;top:661px;width:891px;height:1px;background:#5a5a5a;"></div>
<svg class="a" style="left:878px;top:647px" width="14" height="14"><path d="M3 13L13 3M7 13L13 7M11 13L13 11" stroke="#fff" stroke-width="1.6"/><path d="M2.2 12.2L12.2 2.2M6.2 12.2L12.2 6.2M10.2 12.2L12.2 10.2" stroke="#8c8c8c" stroke-width="1.7"/></svg>
</body></html>
